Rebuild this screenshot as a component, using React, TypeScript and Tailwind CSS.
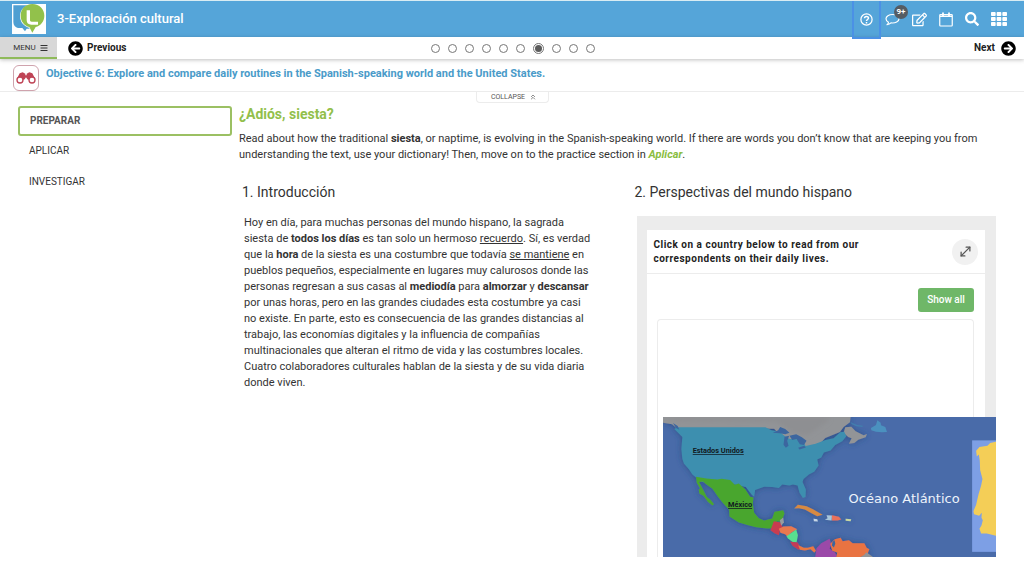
import React from "react";
import {
  FaArrowCircleLeft,
  FaArrowCircleRight,
  FaBars,
  FaRegEdit,
  FaSearch,
  FaTh,
} from "react-icons/fa";
import { ChevronsUp, MoveDiagonal } from "lucide-react";

function Logo() {
  return (
    <svg viewBox="0 0 102 90" className="h-[30px] w-[34px]" role="img" aria-label="Learning site">
      <rect width="102" height="90" fill="#fdfefe" />
      <path d="M4 4h56v70H44l-5 8-8-10H18C10 70 4 64 4 54Z" fill="#4f9fd2" />
      <path d="M61 2c22 0 37 14 37 34 0 18-11 31-26 35l-11 17-10-17C35 66 24 54 24 36 24 16 39 2 61 2Z" fill="#fdfefe" />
      <path d="M61 0c22 0 36 16 36 35 0 17-11 30-26 34l-10 17-9-17C37 65 26 52 26 35 26 15 40 0 61 0Z" fill="#92c14b" />
      <path d="M44 19h10v29c0 3 2 5 5 5h19v9H58c-9 0-14-5-14-13Z" fill="#fff" />
    </svg>
  );
}

function HelpIcon() {
  return (
    <svg viewBox="0 0 26 26" className="size-[13px]" fill="none" stroke="currentColor" strokeWidth="2.5" aria-hidden="true">
      <circle cx="13" cy="13" r="11.2" />
      <path d="M9 10.5C9 6 17 6 17 10c0 3-4 3-4 6" strokeWidth="3" />
      <path d="M13 18v3" strokeWidth="3" />
    </svg>
  );
}

function CommentIcon() {
  return (
    <svg viewBox="0 0 30 26" className="h-[13px] w-[15px]" fill="none" stroke="currentColor" strokeWidth="2.4" strokeLinejoin="round" aria-hidden="true">
      <path d="M15 3C8 3 2 6.500 2 11.500c0 3 2 5.500 5 7-.3 2-1.200 3.500-3 5 3.500-.4 6-1.600 8-3.700 9 1 16-3 16-8.300C28 6.500 22 3 15 3Z" />
    </svg>
  );
}

function CalendarIcon() {
  return (
    <svg viewBox="0 0 28 30" className="h-[15px] w-[14px]" fill="none" stroke="currentColor" strokeWidth="2.4" aria-hidden="true">
      <rect x="1.500" y="5" width="25" height="23" rx="1.500" />
      <path d="M2 8.500h24" strokeWidth="3" />
      <path d="M8 1v7M20 1v7" strokeWidth="3.500" />
    </svg>
  );
}

function Binoculars() {
  return (
    <svg viewBox="0 0 60 36" className="h-[12px] w-[20px]" aria-hidden="true">
      <path d="M11 4 20 1l8 4v5h4V5l8-4 9 3 9 18-10 6-14-6-4-6-4 6-14 6L2 22Z" fill="#bf4456" />
      <circle cx="12" cy="24" r="9" fill="#fff" stroke="#bf4456" strokeWidth="4" />
      <circle cx="48" cy="24" r="9" fill="#fff" stroke="#bf4456" strokeWidth="4" />
    </svg>
  );
}

function WorldMap() {
  return (
    <svg viewBox="39 51 999 420" className="relative block w-full" role="img" aria-label="Mapa del mundo hispano">
      <defs>
        <filter id="coast" x="-20%" y="-20%" width="140%" height="140%">
          <feDropShadow dx="0" dy="0" stdDeviation="9" floodColor="#23457c" floodOpacity="0.7" />
        </filter>
        <filter id="soft" x="-20%" y="-20%" width="140%" height="140%">
          <feGaussianBlur stdDeviation="7" />
        </filter>
      </defs>
      <rect x="39" y="51" width="999" height="420" fill="#496ba9" />
      <g filter="url(#coast)">
        <path d="M39 51h562l-2 16-19 14-11 15-44 18-22 24-45 16-60-38-26-30-292-1-14-12-27-5Z" fill="#929497" />
        <path d="M585 82l18-2 13 14 24 12 10-4-4 10-22 7-12 10-16 2 8-16-10-4-14-12Z" fill="#929497" />
        <path d="M73 87l9-5h264l18 9 24 4 22 18 10 4 36 1 10 20 30-7 30-11 24-5 20-18 12-2 6 14-12 15-21 11-14 16-20 6-8 15-12 6 4 18-13 19-16 8-16 14-3 9 10 22-1 23-8 3-10-16-6-22-14-3-10 3-22-3-10 11-20-3-24-1-27 10-3 20-7-6-18-23-18-4-24-5-22 2-46-4-27-6-12-12-11-9-11-16-14-16-5-14-3-30 3-36Z" fill="#3e8faf" />
        <path d="M138 230l31 5 33 3 12-2 26 4 14 14 12-4 20 18 14 22 10 2-2 18 4 28 14 16 16 7 24-6 7-20 26-5 4 10-9 25-14-2-8 20-12 2-10 0-32-4-24-6-28-8-28-18-1-20-20-22-14-18-16-23-20-14-8-8-12 2 12 22 11 22 12 10 10 12-5 4-14-11-13-18-12-6-2-13 4-3-10-17Z" fill="#4aa62f" />
        <path d="M371 363l20 4 6 13-8 11-3 14-13-6-12-9Z" fill="#c83e4f" />
        <path d="M389 360l10-8 2 14-8 11Z" fill="#9a9c9e" />
        <path d="M386 386l14-7 23-1 18 9-16 9-13 14-7-8-14-4Z" fill="#e97950" />
        <path d="M409 408l29-20 5 17-4 22-13-2-13-11Z" fill="#58df90" />
        <path d="M420 425l22 2 10 16-7 6-18-12Z" fill="#c43b57" />
        <path d="M444 435l17 8 12 0 16-5 8 14-5 5-11-10-17 4-15-2Z" fill="#e97842" />
        <path d="M432 325l11-11 26 4 19 9 29 17-16 4-17-9-20-11-18-4Z" fill="#d68a43" />
        <path d="M490 356l11 1 2 7-12-1Z" fill="#c6d7e7" />
        <path d="M529 345l16 1-1 15-20-2 8-5Z" fill="#a7c6db" />
        <path d="M545 345l21 5 7 8-11 3-17 0Z" fill="#e9715a" />
        <path d="M586 356l17 1-2 6-15-1Z" fill="#c9d9a1" />
        <path d="M495 471l4-27 14-15 25-13 5 17-5 13 17 12 5 13Z" fill="#9b48a8" />
        <path d="M540 431l14-14 17-4 6 10 19-3 11 9 35 0 7 14 8 4-7 18-22 6H558l3-14-15-5Z" fill="#e97342" />
        <path d="M648 456l21 15h-39l12-7Z" fill="#929497" />
      </g>
      <path d="M39 51h500l-10 16-60 40-45-12-45-30-290-1Z" fill="#8e8f92" filter="url(#soft)" />
      <g fill="#3c669f">
        <path d="M368 98l16-7 6-10 15 6 13 11-13 5-16-3Z" />
        <path d="M403 110l14-3-6 15 4 15-8 6-7-9Z" />
        <path d="M418 107l20-4 17 9 14 10-8 13-12-2-10-16-13 3Z" />
        <path d="M444 143l18-6 5 5-19 6Z" />
        <path d="M69 69l14 9 5 11-10-5Z" />
        <path d="M547 425l6-5 2 11-4 11-6-6Z" />
      </g>
      <path d="M662 84l15-9 4-14 10 7 1 8 13 5 5 15-15 1-18-2-14-4Z" fill="#4b91bf" />
      <path d="M600 66l19 8 19 3-2 4-18-2-13-6Z" fill="#437eae" />
      <rect x="965" y="121" width="73" height="334" fill="#7d9fe5" />
      <path d="M1038 125l-19 4-8 8-24 4-10 11 2 17 6-6 3 19 1 28 7 27-4 19-8 27-7 31-8 19 2 9 15 5 8-9-1 15 4 7-4 16-6 10 5 14 17 0 29 7Z" fill="#f4ce57" />
      <g className="font-['Roboto',sans-serif] text-[22px] font-bold" fill="#101820">
        <text x="128" y="159" textDecoration="underline">Estados Unidos</text>
        <text x="234" y="321" textDecoration="underline">México</text>
      </g>
      <text x="595" y="309" className="font-['DejaVu_Sans',sans-serif] text-[39px]" fill="#edf3fb">
        Océano Atlántico
      </text>
    </svg>
  );
}

const pages = [1, 2, 3, 4, 5, 6, 7, 8, 9, 10];

export default function App() {
  return (
    <div className="bg-white pb-2 font-['Roboto','Liberation_Sans',sans-serif] text-[11px] leading-4 text-[#333333]">
      <header className="flex h-[37px] items-center border-t border-[#d9ecf3] bg-[#55a5d9] pr-4 pl-3 text-white">
        <a href="#home" className="block">
          <Logo />
        </a>
        <h1 className="ml-[11px] flex-1 text-[13px] font-medium">3-Exploración cultural</h1>
        <nav aria-label="Tools" className="flex h-full items-center">
          <button aria-label="Help" className="mr-1 flex h-[38px] w-[29px] items-center justify-center self-start border-2 border-t-0 border-[#4b91e5]">
            <HelpIcon />
          </button>
          <button aria-label="Messages" className="relative mr-3">
            <CommentIcon />
            <span className="absolute -top-2 left-[9px] flex size-[14px] items-center justify-center rounded-full bg-[#555c63] text-[8px] leading-none font-bold">9+</span>
          </button>
          <button aria-label="Edit" className="mr-3"><FaRegEdit size={15} /></button>
          <button aria-label="Calendar" className="mr-3"><CalendarIcon /></button>
          <button aria-label="Search" className="mr-3"><FaSearch size={14} /></button>
          <button aria-label="Apps" className="mr-px"><FaTh size={16} /></button>
        </nav>
      </header>

      <div className="flex h-[22px] items-center justify-between shadow-[0_1px_4px_rgba(0,0,0,0.25)]">
        <div className="flex h-full flex-1 items-center">
          <button className="flex h-full w-[57px] items-center justify-center gap-1 border-b-2 border-[#8fba5a] bg-[#d8d8d8] pt-px pl-1 text-[8px] text-[#333333]">
            MENU <FaBars size={8} />
          </button>
          <a href="#previous" className="ml-[11px] flex items-center gap-1 text-[10px] font-bold text-[#222222]">
            <FaArrowCircleLeft size={15} className="text-black" />
            Previous
          </a>
        </div>
        <nav aria-label="Pages" className="flex items-center gap-2 pl-2.5">
          {pages.map((page) => (
            <a
              key={page}
              href={`#page-${page}`}
              aria-label={`Page ${page}`}
              className={
                page === 7
                  ? "flex size-[11px] items-center justify-center rounded-full border border-[#777777] before:size-[7px] before:rounded-full before:bg-[#5c5c5c]"
                  : "size-[9px] rounded-full border border-[#777777]"
              }
            />
          ))}
        </nav>
        <div className="flex flex-1 justify-end pr-2">
          <a href="#next" className="flex items-center gap-1.5 text-[10px] font-bold text-[#222222]">
            Next
            <FaArrowCircleRight size={15} className="text-black" />
          </a>
        </div>
      </div>

      <section className="flex h-[33px] items-start gap-[7px] border-b border-[#ececec] pt-1.5 pl-[13px]">
        <span className="flex size-[26px] shrink-0 items-center justify-center rounded-md border border-[#cfa3ad]">
          <Binoculars />
        </span>
        <h2 className="pt-px text-[11px] font-bold text-[#4a9bc9]">
          Objective 6: Explore and compare daily routines in the Spanish-speaking world and the United States.
        </h2>
      </section>
      <div className="flex h-[10px] justify-center">
        <button className="flex h-[11px] w-[73px] items-center justify-center gap-1 rounded-b-sm border border-t-0 border-[#ececec] pl-1 text-[7px] text-[#555555]">
          COLLAPSE <ChevronsUp size={8} />
        </button>
      </div>

      <div className="flex items-start gap-[7px] pr-4 pl-[18px]">
        <nav aria-label="Sections" className="mt-1 flex w-[214px] shrink-0 flex-col text-[10px]">
          <a href="#preparar" className="flex h-[30px] items-center rounded-[3px] border-2 border-[#9bc063] px-2.5 font-bold text-[#555555]">PREPARAR</a>
          <a href="#aplicar" className="flex h-[30px] items-center px-[11px]">APLICAR</a>
          <a href="#investigar" className="flex h-[31px] items-center px-[11px]">INVESTIGAR</a>
        </nav>

        <main className="min-w-0 flex-1 pt-1">
          <h2 className="text-[14px] font-bold text-[#92bf4b]">¿Adiós, siesta?</h2>
          <p className="mt-[9px]">
            Read about how the traditional <b>siesta</b>, or naptime, is evolving in the Spanish-speaking world. If there are words you don’t know that are keeping you from understanding the text, use your dictionary! Then, move on to the practice section in{" "}
            <a href="#aplicar" className="font-bold text-[#8abd3f] italic">Aplicar</a>.
          </p>

          <div className="mt-[19px] flex gap-[31px] pl-[3px]">
            <section className="min-w-0 flex-1">
              <h3 className="text-[14px] leading-5">1. Introducción</h3>
              <p className="mt-[13px] max-w-[351px] pl-0.5">
                Hoy en día, para muchas personas del mundo hispano, la sagrada siesta de <b>todos los días</b> es tan solo un hermoso <u>recuerdo</u>. Sí, es verdad que la <b>hora</b> de la siesta es una costumbre que todavía <u>se mantiene</u> en pueblos pequeños, especialmente en lugares muy calurosos donde las personas regresan a sus casas al <b>mediodía</b> para <b>almorzar</b> y <b>descansar</b> por unas horas, pero en las grandes ciudades esta costumbre ya casi no existe. En parte, esto es consecuencia de las grandes distancias al trabajo, las economías digitales y la influencia de compañías multinacionales que alteran el ritmo de vida y las costumbres locales. Cuatro colaboradores culturales hablan de la siesta y de su vida diaria donde viven.
              </p>
            </section>

            <section className="min-w-0 flex-1 pr-3">
              <h3 className="text-[14px] leading-5">2. Perspectivas del mundo hispano</h3>
              <div className="mt-[14px] ml-0.5 bg-[#ececec] pt-[14px] pl-2.5">
                <div className="mr-[11px] bg-white">
                  <div className="flex h-[44px] items-center justify-between border-b border-[#ececec] px-[7px]">
                    <p className="w-[240px] text-[10px] leading-[14px] font-bold tracking-wider text-[#222222]">
                      Click on a country below to read from our correspondents on their daily lives.
                    </p>
                    <button aria-label="Expand" className="flex size-[26px] items-center justify-center rounded-full bg-[#f1f1f1] text-[#555555]">
                      <MoveDiagonal size={15} strokeWidth={2} />
                    </button>
                  </div>
                  <div className="flex justify-end pt-[14px] pr-[11px]">
                    <button className="h-6 w-14 rounded-[3px] bg-[#6fb768] text-[10px] font-medium text-white">Show all</button>
                  </div>
                  <div className="mt-[7px] mr-[11px] ml-2.5 h-[98px] rounded-t-sm border border-b-0 border-[#ececec]" />
                </div>
                <div className="bg-white pl-2.5">
                  <div className="border-l border-[#ececec] pl-[5px]">
                    <WorldMap />
                  </div>
                </div>
              </div>
            </section>
          </div>
        </main>
      </div>
    </div>
  );
}
